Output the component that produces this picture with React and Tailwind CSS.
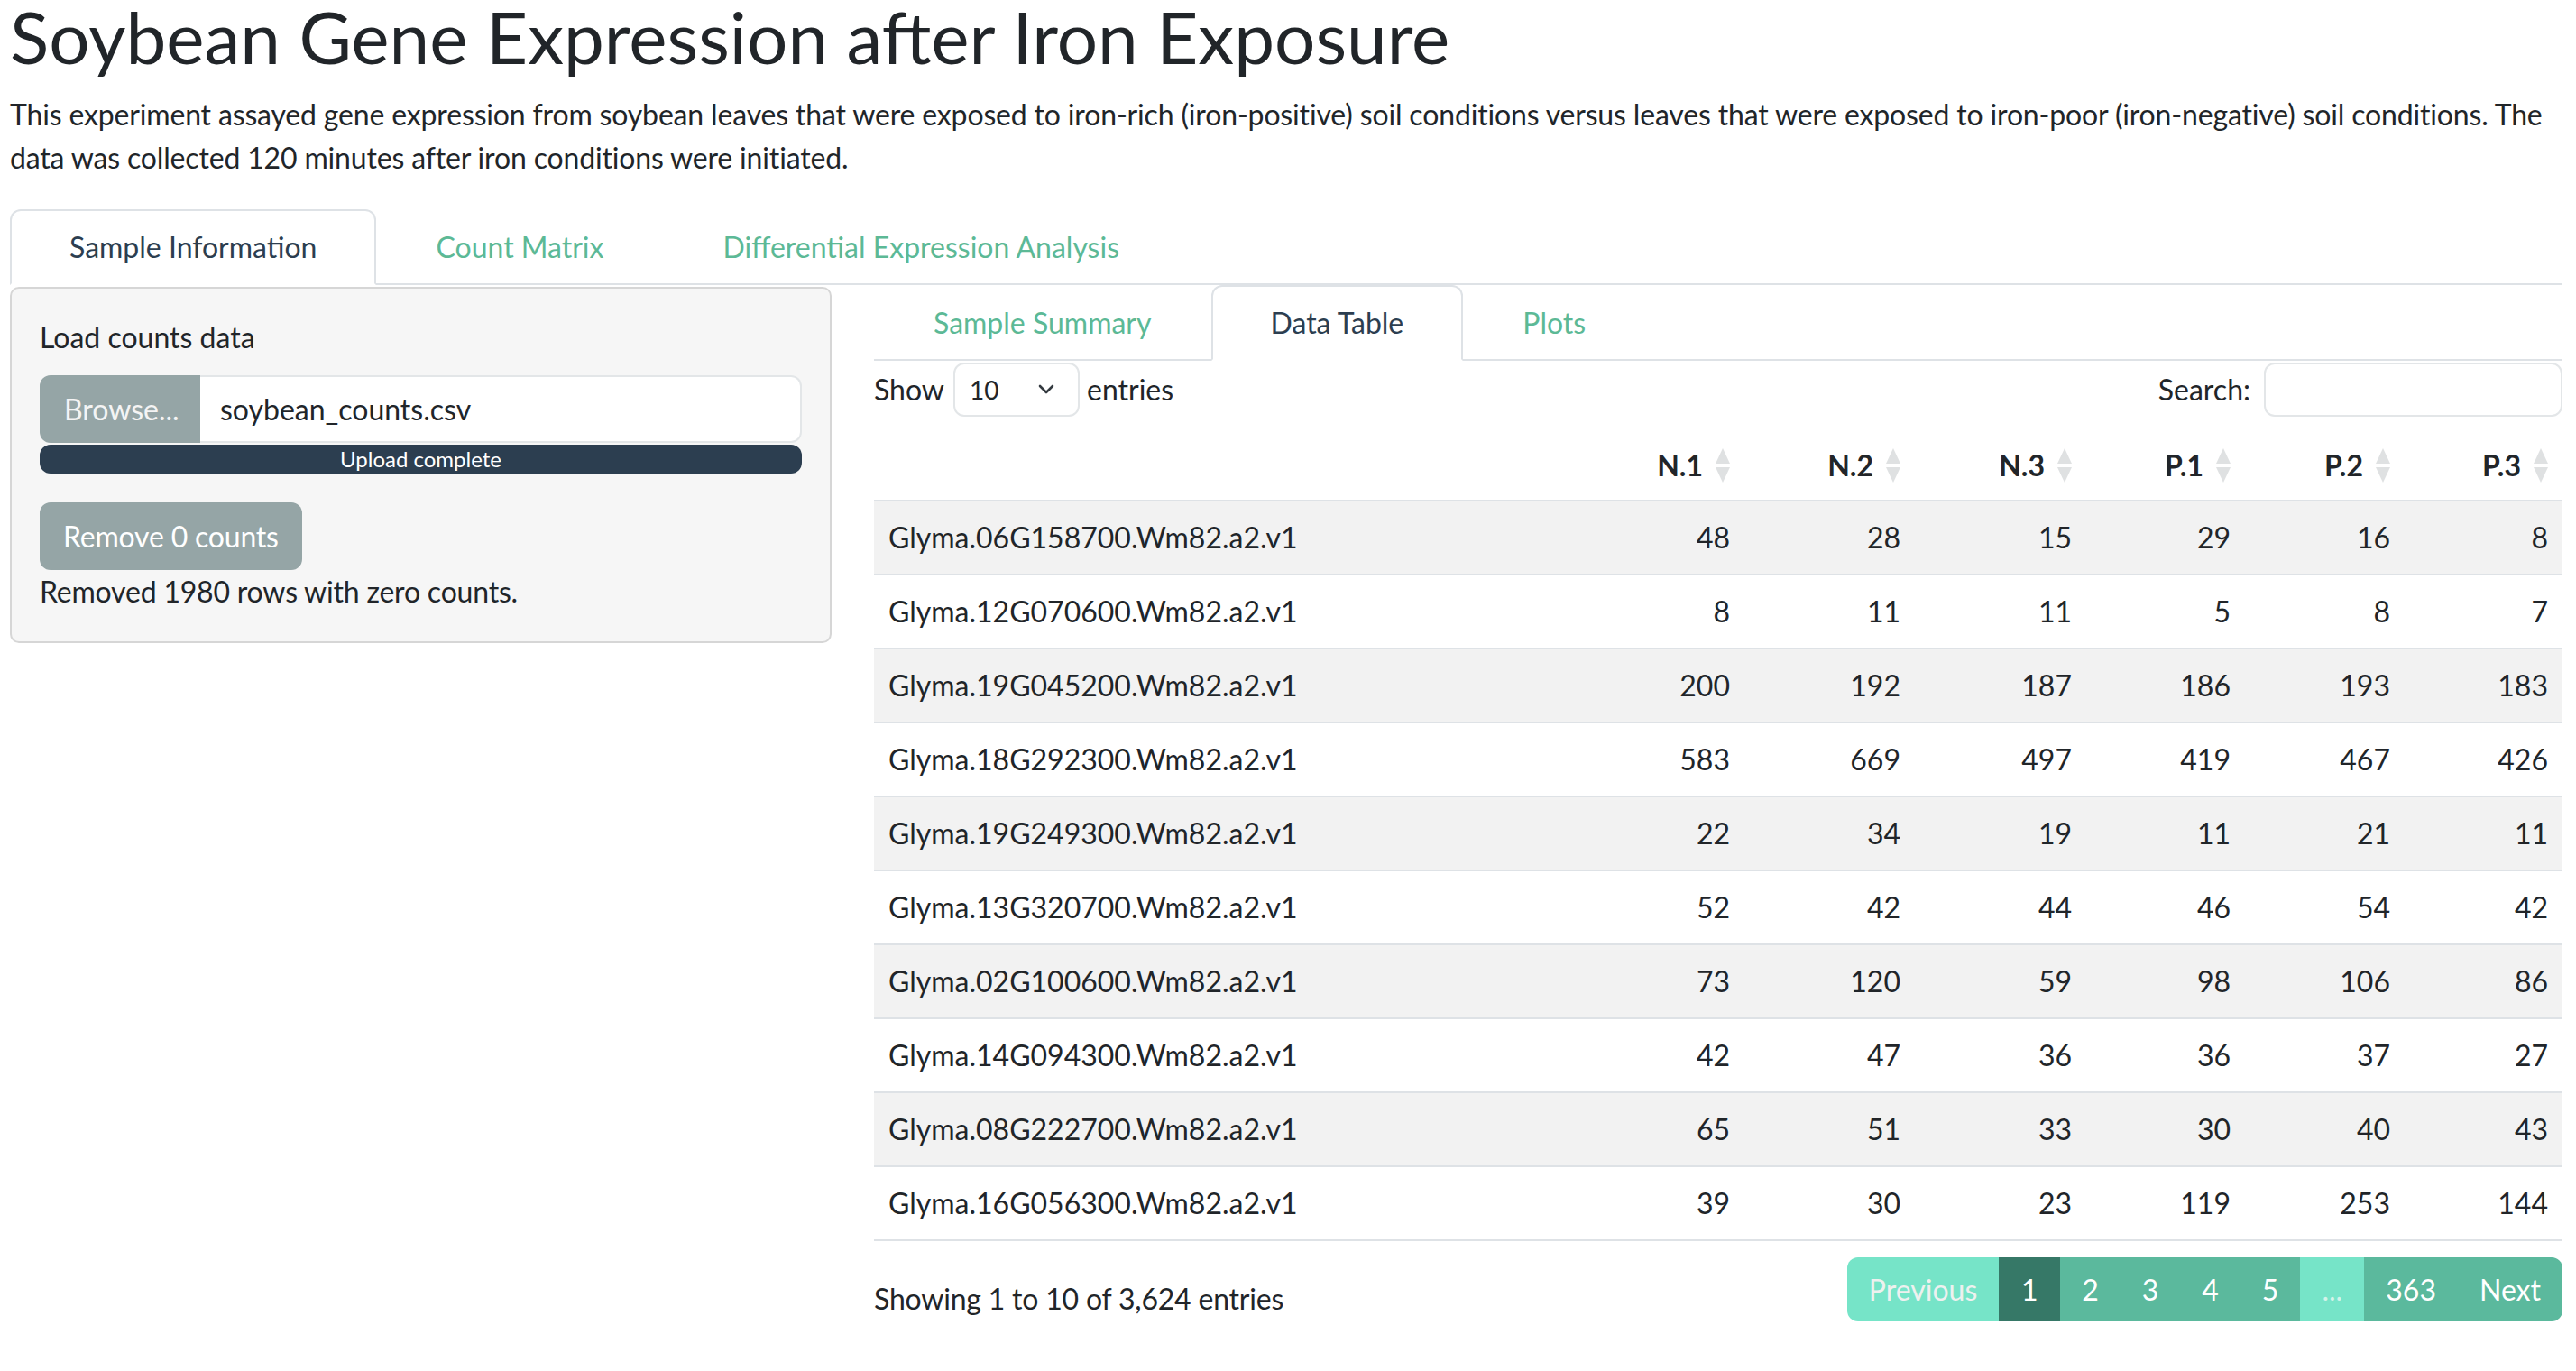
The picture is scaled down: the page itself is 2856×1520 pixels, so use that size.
const rows = [
  ["Glyma.06G158700.Wm82.a2.v1", 48, 28, 15, 29, 16, 8],
  ["Glyma.12G070600.Wm82.a2.v1", 8, 11, 11, 5, 8, 7],
  ["Glyma.19G045200.Wm82.a2.v1", 200, 192, 187, 186, 193, 183],
  ["Glyma.18G292300.Wm82.a2.v1", 583, 669, 497, 419, 467, 426],
  ["Glyma.19G249300.Wm82.a2.v1", 22, 34, 19, 11, 21, 11],
  ["Glyma.13G320700.Wm82.a2.v1", 52, 42, 44, 46, 54, 42],
  ["Glyma.02G100600.Wm82.a2.v1", 73, 120, 59, 98, 106, 86],
  ["Glyma.14G094300.Wm82.a2.v1", 42, 47, 36, 36, 37, 27],
  ["Glyma.08G222700.Wm82.a2.v1", 65, 51, 33, 30, 40, 43],
  ["Glyma.16G056300.Wm82.a2.v1", 39, 30, 23, 119, 253, 144],
];

const cols = ["N.1", "N.2", "N.3", "P.1", "P.2", "P.3"];

const gridCols = "grid grid-cols-[776px_189px_189px_190px_176px_177px_175px]";

function SortArrows() {
  return (
    <svg width="16" height="38" viewBox="0 0 16 38" className="shrink-0">
      <path d="M8 0 L16 17 L0 17 Z" fill="#dfe1e2" />
      <path d="M8 38 L16 21 L0 21 Z" fill="#dfe1e2" />
    </svg>
  );
}

function Tab({ label, active }) {
  return (
    <div
      className={
        "-mb-[2px] px-[64px] pt-[16px] pb-[16px] border-2 rounded-t-[12px] leading-[48px] " +
        (active
          ? "bg-white border-[#dee2e6] border-b-white text-[#2c3e50]"
          : "border-transparent text-[#5cb996]")
      }
    >
      {label}
    </div>
  );
}

function Sidebar() {
  return (
    <div className="w-[911px] shrink-0 mt-[2px] self-start bg-[#f6f6f6] border-2 border-[#d6d6d6] rounded-[10px] px-[31px] pt-[30px] pb-[31px]">
      <div className="leading-[48px] mb-[18px]">Load counts data</div>
      <div className="flex h-[75px]">
        <div className="w-[178px] bg-[#95a5a6] text-[#f4f4f4] rounded-l-[12px] flex items-center pl-[27px]">
          Browse...
        </div>
        <div className="flex-1 bg-white border-2 border-l-0 border-[#e3e6e8] rounded-r-[12px] flex items-center pl-[22px]">
          soybean_counts.csv
        </div>
      </div>
      <div className="mt-[2px] h-[32px] rounded-[12px] bg-[#2c3e50] text-white text-[24px] leading-[32px] text-center">
        Upload complete
      </div>
      <div className="mt-[32px] inline-flex h-[75px] items-center px-[26px] bg-[#95a5a6] text-white rounded-[12px] tracking-[-0.2px]">
        Remove 0 counts
      </div>
      <div className="leading-[48px] tracking-[-0.2px]">Removed 1980 rows with zero counts.</div>
    </div>
  );
}

function DataTable() {
  return (
    <div>
      <div className="flex items-center justify-between h-[60px] mt-[2px]">
        <div className="flex items-center">
          <span>Show</span>
          <div className="ml-[10px] mr-[8px] w-[140px] h-[60px] border-2 border-[#e3e6e8] rounded-[12px] flex items-center justify-between pl-[16px] pr-[26px] text-[28px]">
            <span>10</span>
            <svg width="18" height="12" viewBox="0 0 18 12">
              <path d="M2 2 L9 9 L16 2" fill="none" stroke="#343a40" strokeWidth="2.6" strokeLinecap="round" strokeLinejoin="round" />
            </svg>
          </div>
          <span>entries</span>
        </div>
        <div className="flex items-center">
          <span className="mr-[15px]">Search:</span>
          <div className="w-[331px] h-[60px] border-2 border-[#e3e6e8] rounded-[12px] bg-white" />
        </div>
      </div>

      <div className="mt-[15px]">
        <div className={gridCols + " h-[79px] border-b-2 border-[#dee2e6] font-bold"}>
          <div />
          {cols.map((c) => (
            <div key={c} className="flex items-center justify-end gap-[14px] pr-[16px]">
              <span>{c}</span>
              <SortArrows />
            </div>
          ))}
        </div>
        {rows.map((r, i) => (
          <div
            key={r[0]}
            className={gridCols + " h-[82px] border-b-2 border-[#dee2e6] " + (i % 2 === 0 ? "bg-[#f2f2f2]" : "bg-white")}
          >
            <div className="flex items-center pl-[16px]">{r[0]}</div>
            {r.slice(1).map((v, j) => (
              <div key={j} className="flex items-center justify-end pr-[16px]">
                {v}
              </div>
            ))}
          </div>
        ))}
      </div>

      <div className="flex justify-between items-start mt-[18px]">
        <div className="pt-[22px] leading-[48px] tracking-[-0.2px]">Showing 1 to 10 of 3,624 entries</div>
        <div className="flex h-[71px] rounded-[12px] overflow-hidden text-white">
          <div className="bg-[#76e4c8] text-[#eef1ef] px-[24px] flex items-center">Previous</div>
          <div className="bg-[#367867] w-[68px] flex items-center justify-center">1</div>
          <div className="bg-[#5bb99d] flex">
            {["2", "3", "4", "5"].map((p) => (
              <div key={p} className="w-[66.5px] flex items-center justify-center">{p}</div>
            ))}
          </div>
          <div className="bg-[#76e4c8] text-[#d4f3ea] w-[71px] flex items-center justify-center">...</div>
          <div className="bg-[#5bb99d] flex">
            <div className="px-[24px] flex items-center">363</div>
            <div className="pl-[24px] pr-[24px] flex items-center">Next</div>
          </div>
        </div>
      </div>
    </div>
  );
}

export default function App() {
  return (
    <div className="min-h-screen bg-white text-[#212529] text-[32px] leading-[48px] font-['Lato',sans-serif] pl-[11px] pr-[15px]">
      <h1 className="text-[80px] leading-[80px] font-normal mb-[23px] text-[#212529]">
        Soybean Gene Expression after Iron Exposure
      </h1>
      <p className="mb-[33px] tracking-[-0.16px]">
        This experiment assayed gene expression from soybean leaves that were exposed to iron-rich (iron-positive) soil
        conditions versus leaves that were exposed to iron-poor (iron-negative) soil conditions. The data was collected
        120 minutes after iron conditions were initiated.
      </p>

      <div className="flex border-b-2 border-[#dee2e6]">
        <Tab label="Sample Information" active />
        <Tab label="Count Matrix" />
        <Tab label="Differential Expression Analysis" />
      </div>

      <div className="flex gap-[47px]">
        <Sidebar />
        <div className="flex-1 min-w-0">
          <div className="flex border-b-2 border-[#dee2e6]">
            <Tab label="Sample Summary" />
            <Tab label="Data Table" active />
            <Tab label="Plots" />
          </div>
          <DataTable />
        </div>
      </div>
    </div>
  );
}
